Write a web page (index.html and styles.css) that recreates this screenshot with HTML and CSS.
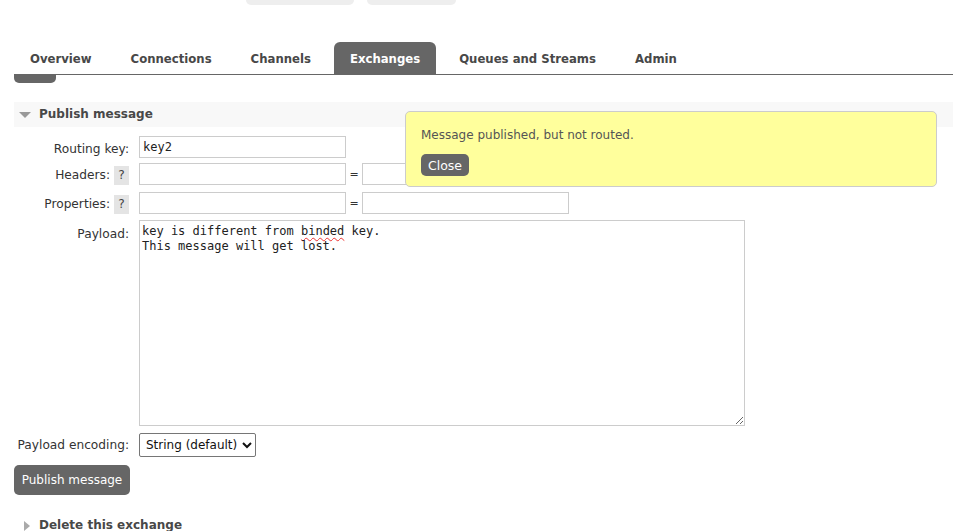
FILE: index.html
```html
<!DOCTYPE html>
<html>
<head>
<meta charset="utf-8">
<link rel="stylesheet" href="styles.css">
</head>
<body>
<div class="top-buttons">
  <span class="top-btn b1"></span>
  <span class="top-btn b2"></span>
</div>
<ul class="tabs">
  <li>Overview</li>
  <li>Connections</li>
  <li>Channels</li>
  <li class="active">Exchanges</li>
  <li>Queues and Streams</li>
  <li>Admin</li>
</ul>
<div class="sub-fragment"></div>

<div class="section">
  <h2 class="section-head open"><span class="tri-down"></span>Publish message</h2>
  <div class="form">
    <div class="row r-key">
      <label class="lbl">Routing key:</label>
      <input class="inp mono" type="text" value="key2">
    </div>
    <div class="row r-head">
      <label class="lbl">Headers: <span class="help">?</span></label>
      <input class="inp" type="text"><span class="eq">=</span><input class="inp" type="text">
    </div>
    <div class="row r-prop">
      <label class="lbl">Properties: <span class="help">?</span></label>
      <input class="inp" type="text"><span class="eq">=</span><input class="inp" type="text">
    </div>
    <div class="row r-pay">
      <label class="lbl">Payload:</label>
      <div class="payload mono">key is different from <span class="spell">binded</span> key.
This message will get lost.</div>
    </div>
    <div class="row r-enc">
      <label class="lbl enc">Payload encoding:</label>
      <select class="sel"><option>String (default)</option></select>
    </div>
  </div>
  <button class="btn publish">Publish message</button>
</div>

<h2 class="section-head closed"><span class="tri-right"></span>Delete this exchange</h2>

<div class="notice">
  <p>Message published, but not routed.</p>
  <button class="btn close">Close</button>
</div>
</body>
</html>
```

FILE: styles.css
```css
html, body {
  margin: 0;
  padding: 0;
  background: #fff;
  font-family: "DejaVu Sans", Verdana, sans-serif;
  font-size: 12px;
  color: #484848;
  overflow: hidden;
  height: 531px;
}
.top-buttons {
  display: flex;
  height: 5px;
  padding-left: 246px;
  gap: 13px;
}
.top-btn {
  display: block;
  height: 5px;
  background: #eee;
  border-radius: 0 0 5px 5px;
}
.b1 { width: 108px; }
.b2 { width: 89px; }

.tabs {
  list-style: none;
  margin: 37px 0 0 14px;
  padding: 0;
  display: flex;
  gap: 7px;
  border-bottom: 1px solid #666;
  height: 32px;
}
.tabs li {
  padding: 1px 16px 0;
  height: 31px;
  line-height: 32px;
  font-weight: bold;
  font-size: 11.7px;
  color: #484848;
  border-radius: 6px 6px 0 0;
  white-space: nowrap;
}
.tabs li.active {
  background: #666;
  color: #fff;
}
.sub-fragment {
  margin-left: 14px;
  width: 42px;
  height: 8px;
  background: #666;
  border-radius: 0 0 5px 5px;
}

.section { margin-top: 19px; }
.section-head {
  margin: 0 0 0 14px;
  height: 25px;
  line-height: 25px;
  font-size: 12px;
  font-weight: bold;
  color: #484848;
  display: flex;
  align-items: center;
}
.section-head.open { background: #f8f8f8; }
.tri-down {
  width: 0; height: 0;
  border-left: 6px solid transparent;
  border-right: 6px solid transparent;
  border-top: 6px solid #999;
  margin: 1px 8px 0 5px;
}
.tri-right {
  width: 0; height: 0;
  border-top: 5px solid transparent;
  border-bottom: 5px solid transparent;
  border-left: 6px solid #aaa;
  margin: 1px 9px 0 10px;
}
.section-head.closed { margin-top: 18px; }

.form {
  margin-top: 9px;
  display: flex;
  flex-direction: column;
}
.row {
  display: flex;
  align-items: center;
}
.lbl {
  width: 115px;
  margin-left: 14px;
  margin-right: 10px;
  text-align: right;
  color: #333;
  display: flex;
  justify-content: flex-end;
  align-items: center;
  gap: 4px;
  font-size: 12.2px;
}
.r-key .lbl { padding-top: 4px; }
.r-head .lbl, .r-prop .lbl { padding-top: 2px; }
.help {
  display: inline-block;
  width: 15px;
  height: 19px;
  line-height: 19px;
  text-align: center;
  background: #e4e4e4;
  color: #444;
}
.inp {
  box-sizing: border-box;
  width: 207px;
  height: 22px;
  border: 1px solid #ccc;
  padding: 1px 4px;
  margin: 0;
  font-family: "DejaVu Sans", sans-serif;
  font-size: 12px;
  outline: none;
}
.inp.mono, .mono {
  font-family: "DejaVu Sans Mono", monospace;
  font-size: 12px;
  color: #222;
}
.inp.mono { padding-left: 3px; }
.eq {
  width: 16px;
  text-align: center;
  color: #333;
  font-size: 11px;
}
.r-head { margin-top: 5px; }
.r-prop { margin-top: 7px; }
.r-pay { margin-top: 6px; align-items: flex-start; }
.r-pay .lbl { margin-top: 7px; }
.payload {
  box-sizing: border-box;
  width: 606px;
  height: 206px;
  border: 1px solid #ccc;
  padding: 3px 2px;
  white-space: pre-wrap;
  line-height: 15px;
  overflow: auto;
  resize: both;
}
.spell {
  text-decoration: underline wavy #e33;
  text-decoration-thickness: 1px;
  text-underline-offset: 2px;
}
.r-enc { margin-top: 7px; }
.sel {
  box-sizing: border-box;
  height: 24px;
  width: 117px;
  border: 1px solid #767676;
  border-radius: 2px;
  background: #fff;
  font-family: "DejaVu Sans", sans-serif;
  font-size: 12px;
  color: #111;
  padding: 0 2px;
}
.btn {
  background: #666;
  color: #fff;
  border: none;
  border-radius: 5px;
  font-family: "DejaVu Sans", sans-serif;
  font-size: 12px;
  cursor: pointer;
}
.publish {
  margin: 8px 0 0 14px;
  width: 116px;
  height: 30px;
  padding: 0;
}

.notice {
  position: absolute;
  left: 405px;
  top: 111px;
  box-sizing: border-box;
  width: 532px;
  height: 76px;
  background: #ffff9c;
  border: 1px solid #ccc;
  border-radius: 5px;
  padding: 15px 15px;
}
.notice p {
  margin: 0;
  font-size: 12px;
  color: #555;
  line-height: 16px;
}
.close {
  margin-top: 11px;
  width: 48px;
  height: 22px;
  padding: 0;
  font-size: 12.5px;
}
```
